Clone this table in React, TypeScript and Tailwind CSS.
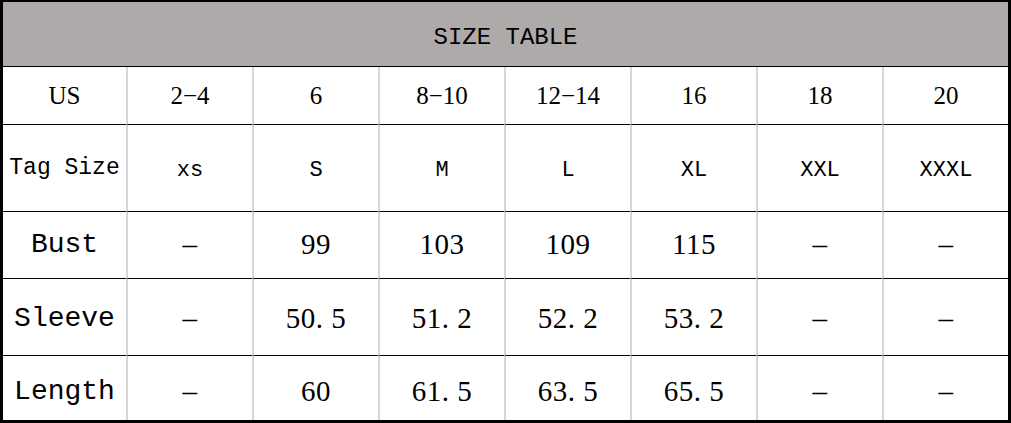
import React from 'react';

const SERIF = 'font-["Liberation_Serif",serif]';
const MONO = 'font-["Liberation_Mono",monospace]';

const US = ['2−4', '6', '8−10', '12−14', '16', '18', '20'];
const TAGS = ['xs', 'S', 'M', 'L', 'XL', 'XXL', 'XXXL'];

const ROWS = [
  { label: 'Bust', pad: '', values: ['–', '99', '103', '109', '115', '–', '–'] },
  { label: 'Sleeve', pad: 'pt-1', values: ['–', '50. 5', '51. 2', '52. 2', '53. 2', '–', '–'] },
  { label: 'Length', pad: 'pt-2', values: ['–', '60', '61. 5', '63. 5', '65. 5', '–', '–'] },
];

const Cell: React.FC<{ children: React.ReactNode; first?: boolean; last?: boolean; className?: string }> = ({ children, first, last, className = '' }) => (
  <div
    className={`flex items-center justify-center text-black ${first ? '' : 'border-l-2 border-[#d6d6d6]'} ${last ? '' : 'border-b border-b-black'} ${className}`}
  >
    {children}
  </div>
);

const App: React.FC = () => {
  return (
    <div className="w-[1011px] h-[423px] bg-white">
      <div className="w-full h-full border-black border-t-2 border-l-[3px] border-r-[3px] border-b-[3px] grid grid-cols-[123px_126px_126px_126px_126px_126px_126px_1fr] grid-rows-[65px_58px_87px_67px_77px_64px]">
        <div className={`col-span-8 bg-[#aeaaa9] border-b border-black flex items-center justify-center pt-2 text-[24px] text-black ${MONO}`}>
          SIZE TABLE
        </div>

        <Cell first className={`${SERIF} text-[25px]`}>US</Cell>
        {US.map(v => (
          <Cell key={v} className={`${SERIF} text-[25px]`}>{v}</Cell>
        ))}

        <Cell first className={`${MONO} text-[23px]`}>Tag Size</Cell>
        {TAGS.map(v => (
          <Cell key={v} className={`${MONO} text-[22px] pt-1`}>{v}</Cell>
        ))}

        {ROWS.map((row, i) => (
          <React.Fragment key={row.label}>
            <Cell first last={i === ROWS.length - 1} className={`${MONO} text-[28px] ${row.pad}`}>{row.label}</Cell>
            {row.values.map((v, j) => (
              <Cell key={j} last={i === ROWS.length - 1} className={`${SERIF} text-[29px] tracking-[0.5px] ${row.pad}`}>{v}</Cell>
            ))}
          </React.Fragment>
        ))}
      </div>
    </div>
  );
};

export default App;
